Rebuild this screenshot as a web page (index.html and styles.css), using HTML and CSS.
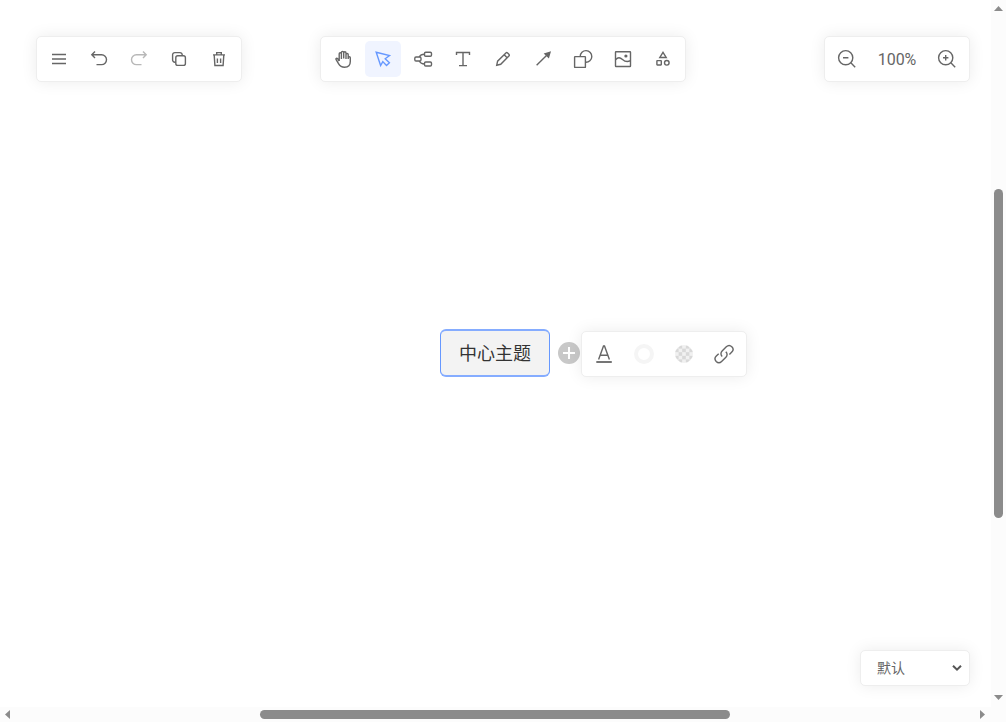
FILE: index.html
```html
<!DOCTYPE html>
<html lang="zh">
<head>
<meta charset="utf-8">
<title>Board</title>
<link rel="stylesheet" href="styles.css">
</head>
<body>
<div class="window">
  <main class="board">
    <header class="toolbars">
      <div class="bar">
        <button class="tool"><svg viewBox="0 0 36 36"><path d="M11 13.5H25M11 18H25M11 22.5H25"/></svg></button>
        <button class="tool"><svg viewBox="0 0 36 36"><path d="M11 13.8H20.6a4.9 4.9 0 0 1 0 9.8H15.5M14 10.5L10.8 13.8L14 17"/></svg></button>
        <button class="tool disabled"><svg viewBox="0 0 36 36"><path d="M25 13.8H15.4a4.9 4.9 0 0 0 0 9.8H20.5M22 10.5L25.2 13.8L22 17"/></svg></button>
        <button class="tool"><svg viewBox="0 0 36 36"><rect x="14.8" y="14.8" width="9.6" height="9.6" rx="2"/><path d="M14.8 21.2H13.8a2.2 2.2 0 0 1-2.2-2.2V13.8a2.2 2.2 0 0 1 2.2-2.2H19a2.2 2.2 0 0 1 2.2 2.2V14.8"/></svg></button>
        <button class="tool"><svg viewBox="0 0 36 36"><path d="M12 13.9H24M15.7 13.7V11.6H20.3V13.7M13.2 14L13.9 24.5H22.1L22.8 14M16.4 17.5V22M19.6 17.5V22"/></svg></button>
      </div>
      <div class="bar">
        <button class="tool"><svg viewBox="0 0 36 36"><path d="M14.2 20V12.8a1.1 1.1 0 0 1 2.2 0V18M16.4 17.5V11.5a1.1 1.1 0 0 1 2.3 0V17.5M18.7 17.5V11.9a1.1 1.1 0 0 1 2.3 0V18M21 18V13.6a1.1 1.1 0 0 1 2.2 0V18M23.2 17.5V16.8a1.05 1.05 0 0 1 2.1 0V20.5C25.3 24 23 26.2 19.6 26.2C16.4 26.2 14.8 24.9 13.5 22.6L11 18.4C10.6 17.4 11.8 16.7 12.6 17.6L14.2 20"/></svg></button>
        <button class="tool selected"><svg viewBox="0 0 36 36"><path d="M11.2 11.3L24.5 14.6L20.2 17.7L24.4 21.7L21.5 24.5L17.8 20.6L15.6 24.5Z"/></svg></button>
        <button class="tool"><svg viewBox="0 0 36 36"><rect x="9.8" y="16" width="6.2" height="4" rx="1.2"/><rect x="19.5" y="11.3" width="7" height="4" rx="1.2"/><rect x="19.5" y="21" width="7" height="4" rx="1.2"/><path d="M14.3 16C15.3 14 17 13.3 19.5 13.3M14.3 20C15.3 22 17 23 19.5 23"/></svg></button>
        <button class="tool"><svg viewBox="0 0 36 36"><path d="M11.5 14V11.5H24.5V14M18 11.5V24.6M14 24.6H22"/></svg></button>
        <button class="tool"><svg viewBox="0 0 36 36"><path d="M11.7 24.3L12.6 20.2L20.9 12Q21.7 11.2 22.6 12L23.9 13.3Q24.7 14.2 23.9 15L15.7 23.3ZM19.2 13.8L22.1 16.7"/></svg></button>
        <button class="tool"><svg viewBox="0 0 36 36"><path d="M11.6 24.3L21.5 14.5"/><path class="solid" d="M26 10.3L18.7 12.6L23.9 17.6Z"/></svg></button>
        <button class="tool"><svg viewBox="0 0 36 36"><rect x="9.6" y="15.6" width="10.8" height="10.8" rx=".5"/><path d="M15.2 15.4A5.8 5.8 0 1 1 20.6 21.2"/></svg></button>
        <button class="tool"><svg viewBox="0 0 36 36"><rect x="10.5" y="10.7" width="15" height="14.8" rx=".5"/><path d="M10.5 18.8C13 15.9 15 16.3 17.5 18.5C20 20.7 23 21 25.5 19.6"/><circle class="solid" cx="20.9" cy="15" r="1.6"/></svg></button>
        <button class="tool"><svg viewBox="0 0 36 36"><path d="M18 11.4L21.2 16.5H14.8Z"/><rect x="11.9" y="19.6" width="4.4" height="4.4" rx=".4"/><circle cx="21.8" cy="21.8" r="2.3"/></svg></button>
      </div>
      <div class="bar">
        <button class="tool"><svg viewBox="0 0 36 36"><circle cx="16.7" cy="16.7" r="7.1"/><path d="M21.8 21.8L26.2 26.2M14 16.7H19.4"/></svg></button>
        <span class="zoom">100%</span>
        <button class="tool"><svg viewBox="0 0 36 36"><circle cx="16.7" cy="16.7" r="7.1"/><path d="M21.8 21.8L26.2 26.2M14 16.7H19.4M16.7 14V19.4"/></svg></button>
      </div>
    </header>

    <div class="node">中心主题</div>
    <svg class="add" viewBox="0 0 22 22"><circle cx="11" cy="11" r="11"/><path d="M5 11H17M11 5V17"/></svg>
    <div class="bar popup">
      <button class="tool"><svg viewBox="0 0 36 36"><path d="M12.6 23.5L17.5 10H18.5L23.4 23.5M14.4 19.2H21.6"/><path class="underline" d="M10.3 26H25.8"/></svg></button>
      <button class="tool"><svg viewBox="0 0 36 36"><circle class="ring" cx="18" cy="18" r="8"/></svg></button>
      <button class="tool"><span class="checker"></span></button>
      <button class="tool"><svg viewBox="0 0 36 36"><path d="M16.2 20.4C14.5 18.7 14.6 16.5 16.1 15L20.3 10.8C22 9.1 24.2 9.1 25.8 10.7C27.4 12.3 27.4 14.5 25.8 16.1L23.4 18.5M19.8 15.8C21.5 17.5 21.5 19.7 19.9 21.3L15.6 25.5C14 27.1 11.8 27.1 10.2 25.5C8.7 23.9 8.7 21.7 10.3 20.1L12.7 17.7"/></svg></button>
    </div>

    <div class="theme"><span>默认</span><svg viewBox="0 0 10 8"><path d="M1 1.7L5 5.7L9 1.7"/></svg></div>
  </main>

  <div class="scroll vertical">
    <svg class="cap" viewBox="0 0 15 15"><path d="M3 11H12L7.5 6Z"/></svg>
    <div class="track"><div class="thumb"></div></div>
    <svg class="cap" viewBox="0 0 15 15"><path d="M3 3H12L7.5 8Z"/></svg>
  </div>
  <div class="scroll horizontal">
    <svg class="cap" viewBox="0 0 15 15"><path d="M10 3V12L5 7.5Z"/></svg>
    <div class="track"><div class="thumb"></div></div>
    <svg class="cap" viewBox="0 0 15 15"><path d="M4 3V12L9 7.5Z"/></svg>
  </div>
  <div class="corner"></div>
</div>
</body>
</html>
```
FILE: styles.css
```css
* { box-sizing: border-box; }

body {
  margin: 0;
  overflow: hidden;
  background: #fff;
  color: #666;
  font-family: Roboto, "Noto Sans CJK SC", sans-serif;
}

.window {
  display: grid;
  grid-template-columns: 1fr 15px;
  grid-template-rows: 1fr 15px;
  width: 100vw;
  height: 100vh;
}

.board {
  position: relative;
  display: flex;
  flex-direction: column;
  justify-content: space-between;
  padding: 36px 21px 21px 36px;
}

.toolbars {
  display: grid;
  grid-template-columns: 206px 366px 1fr;
  column-gap: 78px;
}

.toolbars .bar:last-child { justify-self: end; width: 146px; }

.bar {
  display: flex;
  justify-content: space-between;
  height: 46px;
  padding: 4px;
  background: #fff;
  border: 1px solid #eee;
  border-radius: 5px;
  box-shadow: 0 0 16px #00000014;
}

.tool {
  width: 36px;
  height: 36px;
  padding: 0;
  border: 0;
  border-radius: 5px;
  background: none;
  color: #666;
}

.tool svg {
  display: block;
  width: 36px;
  height: 36px;
  fill: none;
  stroke: currentColor;
  stroke-width: 1.4;
}

.tool .solid { fill: currentColor; stroke: none; }
.tool .underline { stroke-width: 1.8; }
.tool .ring { stroke: #f5f5f5; stroke-width: 4; }
.tool.disabled { color: #b8b8b8; }
.tool.selected { background: #f0f4ff; color: #6698ff; }

.zoom {
  font-size: 16px;
  line-height: 38px;
}

.node {
  position: absolute;
  left: 440px;
  top: 329px;
  width: 110px;
  height: 48px;
  border: solid #6698ff;
  border-width: 2px 1px;
  border-top-color: #85acff;
  border-bottom-color: #85acff;
  border-radius: 6px;
  background: #f3f3f3;
  color: #333;
  font-family: "Noto Sans CJK SC", sans-serif;
  font-size: 18px;
  line-height: 42px;
  text-align: center;
}

.add {
  position: absolute;
  left: 558px;
  top: 342px;
  width: 22px;
  height: 22px;
  fill: #c8c8c8;
}

.add path { stroke: #fff; stroke-width: 2; }

.popup {
  position: absolute;
  left: 581px;
  top: 331px;
  width: 166px;
}

.checker {
  display: block;
  width: 18px;
  height: 18px;
  margin: 0 auto;
  border-radius: 50%;
  background: repeating-conic-gradient(#d9d9d9 0 25%, #f1f1f1 0 50%) 0 0 / 7.2px 7.2px;
}

.theme {
  align-self: flex-end;
  display: flex;
  align-items: center;
  justify-content: space-between;
  width: 110px;
  height: 36px;
  padding: 0 7px 0 16px;
  border: 1px solid #eee;
  border-radius: 5px;
  box-shadow: 0 0 16px #00000014;
  background: #fff;
  font-size: 14px;
}

.theme span { padding-bottom: 2px; }
.theme svg { width: 10px; height: 8px; fill: none; stroke: #555; stroke-width: 2; }

.scroll { display: flex; background: #fcfcfc; }
.vertical { flex-direction: column; }
.corner { background: #fcfcfc; }
.cap { flex: none; width: 15px; height: 15px; fill: #8b8b8b; }
.track { flex: 1; }
.thumb { border-radius: 5px; background: #8b8b8b; }
.vertical .thumb { width: 9px; height: 329px; margin: 174px 0 0 3px; }
.horizontal .thumb { width: 470px; height: 9px; margin: 3px 0 0 245px; }
```
